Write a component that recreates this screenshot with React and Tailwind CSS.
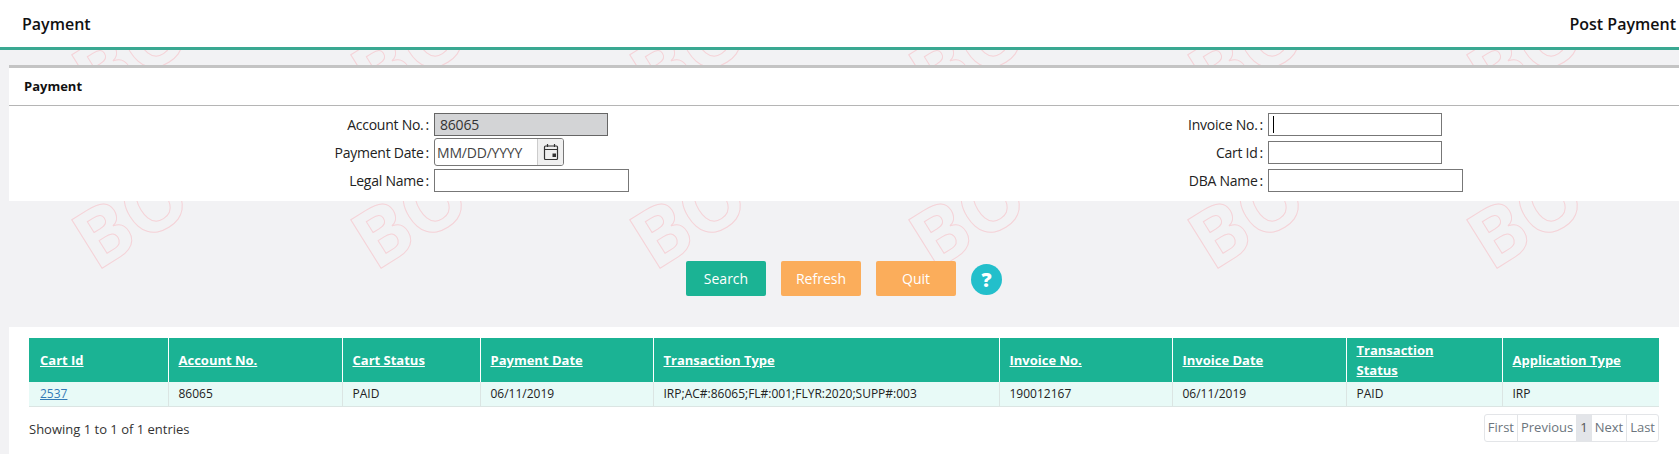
import React from 'react';

const font = { fontFamily: '"Open Sans", "Noto Sans", sans-serif' };

const columns = [
  { title: 'Cart Id', width: 139 },
  { title: 'Account No.', width: 174 },
  { title: 'Cart Status', width: 138 },
  { title: 'Payment Date', width: 173 },
  { title: 'Transaction Type', width: 346 },
  { title: 'Invoice No.', width: 173 },
  { title: 'Invoice Date', width: 174 },
  { title: 'Transaction Status', width: 156, wrap: true },
  { title: 'Application Type', width: 157 },
];

const row = ['2537', '86065', 'PAID', '06/11/2019', 'IRP;AC#:86065;FL#:001;FLYR:2020;SUPP#:003', '190012167', '06/11/2019', 'PAID', 'IRP'];

function Watermark() {
  return (
    <svg className="absolute inset-0 w-full h-full pointer-events-none" aria-hidden="true">
      <defs>
        <pattern id="wm" width="279" height="165" patternUnits="userSpaceOnUse">
          <text
            x="96"
            y="107"
            transform="rotate(-32 96 107)"
            fontSize="80"
            fontWeight="700"
            fontFamily="Open Sans, sans-serif"
            fill="none"
            stroke="#f5d3d8"
            strokeWidth="1"
          >
            BO
          </text>
        </pattern>
      </defs>
      <rect width="100%" height="100%" fill="url(#wm)" />
    </svg>
  );
}

function Field({ label, children }) {
  return (
    <div className="flex items-center h-[28px]">
      <label className="w-[425px] text-right text-[14px] tracking-[-0.25px] text-[#222] pr-[5px]">
        {label}
        <span className="ml-[2px]">:</span>
      </label>
      {children}
    </div>
  );
}

function CalendarIcon() {
  return (
    <svg width="16" height="18" viewBox="0 0 16 18" fill="none" stroke="#333" strokeWidth="1.2">
      <rect x="1.5" y="3" width="13" height="13.5" rx="1" />
      <path d="M1.5 6.5h13M4.5 1v3M11.5 1v3" />
      <rect x="9.5" y="10.5" width="3.5" height="3.5" fill="#333" stroke="none" />
    </svg>
  );
}

function PageButton({ children, active }) {
  return (
    <span className={`flex items-center px-[3px] h-full border-l border-[#e3e5e8] first:border-l-0 ${active ? 'bg-[#e3e5e9] text-[#555]' : 'text-[#6c757d]'}`}>
      {children}
    </span>
  );
}

export default function App() {
  return (
    <div style={font} className="relative min-h-screen bg-[#f2f2f4] overflow-hidden">
      <Watermark />

      <div className="relative">
        <header className="flex items-center justify-between h-[50px] bg-white border-b-[3px] border-[#3aa892] pl-[22px] pr-[3px] text-[16px] font-semibold text-[#111]">
          <span>Payment</span>
          <span>Post Payment</span>
        </header>

        <section className="ml-[9px] mt-[15px] bg-white border-t-[3px] border-[#c4c4c4] h-[136px]">
          <h2 className="flex items-center h-[38px] pl-[15px] text-[13px] font-bold text-[#111] border-b border-[#b5b5b5]">Payment</h2>
          <div className="flex pt-[4px]">
            <div className="w-[834px]">
              <Field label="Account No.">
                <input readOnly value="86065" className="w-[174px] h-[23px] bg-[#d3d4d6] border border-[#666] px-[5px] text-[14px] tracking-[-0.2px] text-[#333]" />
              </Field>
              <Field label="Payment Date">
                <div className="flex w-[130px] h-[28px] border border-[#777] rounded-[3px] overflow-hidden">
                  <input readOnly placeholder="MM/DD/YYYY" className="w-[102px] px-[2px] text-[14px] tracking-[-0.2px] placeholder:text-[#444]" />
                  <span className="flex flex-1 items-center justify-center bg-[#f0f0f0] border-l border-[#ccc]">
                    <CalendarIcon />
                  </span>
                </div>
              </Field>
              <Field label="Legal Name">
                <input className="w-[195px] h-[23px] bg-white border border-[#777]" />
              </Field>
            </div>
            <div>
              <Field label="Invoice No.">
                <div className="relative">
                  <input className="block w-[174px] h-[23px] bg-white border border-[#777]" />
                  <span className="absolute left-[5px] top-[3px] w-px h-[17px] bg-black" />
                </div>
              </Field>
              <Field label="Cart Id">
                <input className="w-[174px] h-[23px] bg-white border border-[#777]" />
              </Field>
              <Field label="DBA Name">
                <input className="w-[195px] h-[23px] bg-white border border-[#777]" />
              </Field>
            </div>
          </div>
        </section>

        <div className="flex items-start justify-center gap-[15px] h-[126px] pt-[60px] pl-[9px]">
          <button className="w-[80px] h-[35px] rounded-[2px] bg-[#1bb394] text-white text-[14px]">Search</button>
          <button className="w-[80px] h-[35px] rounded-[2px] bg-[#fbad5b] text-white text-[14px]">Refresh</button>
          <button className="w-[80px] h-[35px] rounded-[2px] bg-[#fbad5b] text-white text-[14px]">Quit</button>
          <span className="flex items-center justify-center w-[31px] h-[31px] mt-[3px] rounded-full bg-[#23bfcb] text-white text-[20px] font-extrabold">?</span>
        </div>

        <section className="ml-[9px] bg-white pl-[20px] pr-[20px] pt-[11px] h-[127px]">
          <table className="table-fixed border-collapse w-[1630px]">
            <colgroup>
              {columns.map((c) => (
                <col key={c.title} style={{ width: c.width }} />
              ))}
            </colgroup>
            <thead>
              <tr className="h-[44px] bg-[#1bb394]">
                {columns.map((c) => (
                  <th key={c.title} className={`pl-[10px] first:pl-[11px] text-left text-[13px] leading-[20px] font-bold text-white underline border-l border-white first:border-l-0 ${c.wrap ? 'pr-[40px]' : 'pr-[10px]'}`}>
                    {c.title}
                  </th>
                ))}
              </tr>
            </thead>
            <tbody>
              <tr className="h-[24px] bg-[#e8faf7] border-b border-[#dbe5e3]">
                {row.map((cell, i) => (
                  <td key={i} className={`pl-[10px] first:pl-[11px] pr-[10px] text-[12px] border-l border-[#dbe5e3] first:border-l-0 ${i === 0 ? 'text-[#337ab7] underline' : 'text-[#222]'}`}>
                    {cell}
                  </td>
                ))}
              </tr>
            </tbody>
          </table>
          <div className="flex items-center justify-between mt-[7px] w-[1630px]">
            <span className="mt-[5px] text-[13px] text-[#333]">Showing 1 to 1 of 1 entries</span>
            <div className="flex items-center h-[28px] border border-[#e3e5e8] rounded-[3px] text-[13px]">
              <PageButton>First</PageButton>
              <PageButton>Previous</PageButton>
              <PageButton active>1</PageButton>
              <PageButton>Next</PageButton>
              <PageButton>Last</PageButton>
            </div>
          </div>
        </section>
      </div>
    </div>
  );
}
